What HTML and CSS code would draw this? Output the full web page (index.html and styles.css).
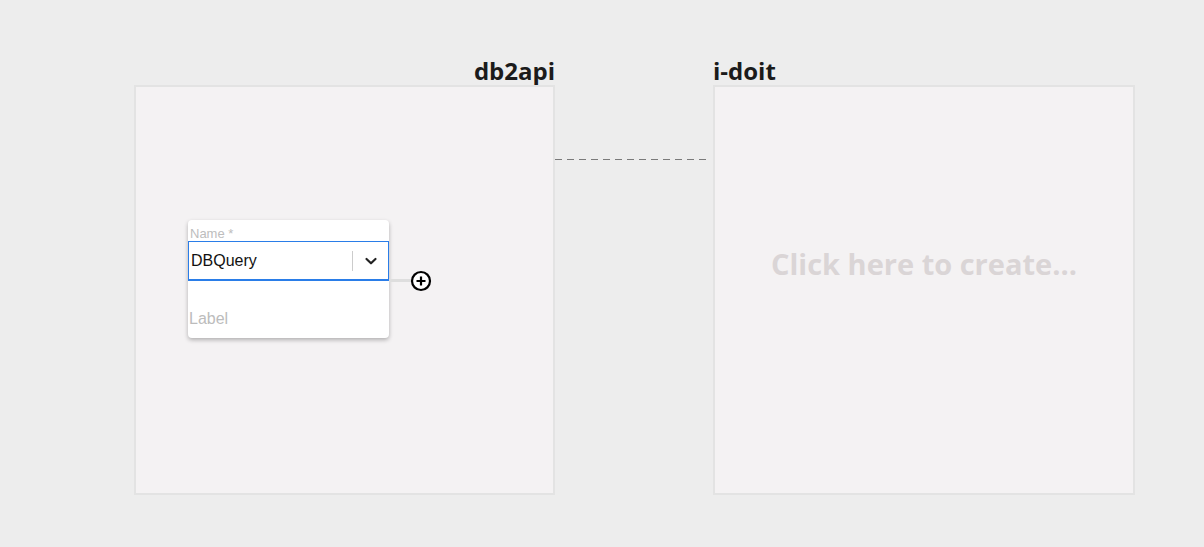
FILE: index.html
```html
<!DOCTYPE html>
<html>
<head>
<meta charset="utf-8">
<link rel="stylesheet" href="styles.css">
</head>
<body>
<div class="canvas">
  <div class="column">
    <div class="title title-right">db2api</div>
    <div class="panel panel-left">
      <div class="card">
        <div class="field-label">Name *</div>
        <div class="select">
          <span class="select-value">DBQuery</span>
          <span class="select-sep"></span>
          <svg class="chevron" width="14" height="10" viewBox="0 0 14 10"><path d="M2.5 3 L7 7.3 L11.5 3" fill="none" stroke="#222" stroke-width="2.2" stroke-linecap="round" stroke-linejoin="round"/></svg>
        </div>
        <div class="label-field">Label</div>
        <div class="connector"></div>
        <svg class="plus" width="22" height="22" viewBox="0 0 22 22"><circle cx="11" cy="11" r="9" fill="#fff" stroke="#000" stroke-width="2.2"/><path d="M11 6.5 V15.5 M6.5 11 H15.5" stroke="#000" stroke-width="2.2"/></svg>
      </div>
    </div>
  </div>
  <div class="link">
    <svg width="152" height="1" viewBox="0 0 152 1"><line x1="0" y1="0.5" x2="152" y2="0.5" stroke="#7a7a7a" stroke-width="1" stroke-dasharray="7 5"/></svg>
  </div>
  <div class="column">
    <div class="title">i-doit</div>
    <div class="panel panel-right">
      <div class="placeholder">Click here to create...</div>
    </div>
  </div>
</div>
</body>
</html>
```

FILE: styles.css
```css
html, body {
  margin: 0;
  padding: 0;
  background: #ededed;
  width: 1204px;
  height: 547px;
  overflow: hidden;
}
.canvas {
  display: flex;
  align-items: flex-start;
  padding: 57px 0 0 134px;
}
.column {
  display: flex;
  flex-direction: column;
}
.title {
  font-family: "Open Sans", sans-serif;
  font-weight: 700;
  font-size: 24px;
  line-height: 28px;
  height: 28px;
  color: #1b1b1b;
}
.title-right {
  text-align: right;
}
.panel {
  box-sizing: border-box;
  height: 410px;
  background: #f4f2f3;
  border: 2px solid #e3e3e3;
}
.panel-left {
  width: 421px;
  padding: 133px 0 0 52px;
}
.panel-right {
  width: 422px;
  padding-top: 160px;
}
.link {
  width: 158px;
  padding-top: 102px;
  line-height: 0;
}
.link svg {
  display: block;
}
.card {
  position: relative;
  width: 201px;
  height: 118px;
  background: #fff;
  border-radius: 4px;
  box-shadow: 0 2px 4px rgba(0, 0, 0, 0.28);
  font-family: "Liberation Sans", Arial, sans-serif;
}
.field-label {
  font-size: 13px;
  line-height: 13px;
  color: #bdbdbd;
  padding: 7px 0 1px 2px;
}
.select {
  box-sizing: border-box;
  height: 40px;
  border: 1px solid #2a7de8;
  border-bottom-width: 2px;
  display: flex;
  align-items: center;
  padding-left: 2px;
}
.select-value {
  flex: 1;
  font-size: 16px;
  color: #111;
}
.select-sep {
  width: 1px;
  height: 20px;
  background: #cccccc;
}
.chevron {
  margin: 0 10px 0 11px;
}
.label-field {
  font-size: 16px;
  color: #bcbcbc;
  padding: 29px 0 0 1px;
  line-height: 18px;
}
.connector {
  position: absolute;
  left: 201px;
  top: 59px;
  width: 22px;
  height: 3px;
  background: #dedede;
}
.plus {
  position: absolute;
  left: 222px;
  top: 50px;
}
.placeholder {
  font-family: "Open Sans", sans-serif;
  font-weight: 700;
  font-size: 29px;
  line-height: 34px;
  color: #dad5d6;
  text-align: center;
}
```
